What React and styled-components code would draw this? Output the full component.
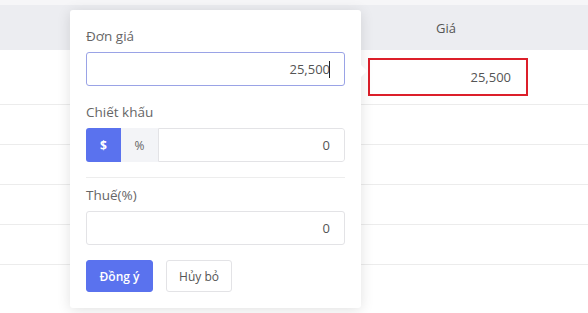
import React from 'react';
import styled, {createGlobalStyle} from 'styled-components';

const GlobalStyle = createGlobalStyle`
    html, body {
        margin: 0;
        padding: 0;
        background: #ffffff;
        font-family: "Open Sans", "Noto Sans", sans-serif;
    }
    * {
        box-sizing: border-box;
    }
`;

const Page = styled.div`
    position: relative;
    width: 588px;
    height: 313px;
    overflow: hidden;
    background: #ffffff;
`;

const TopStrip = styled.div`
    height: 5px;
    background: #f6f6f8;
`;

const Row = styled.div`
    display: grid;
    grid-template-columns: 360px 172px 1fr;
    align-items: center;
    height: ${(p) => p.h}px;
    background: ${(p) => (p.head ? '#ecedf1' : '#ffffff')};
    border-bottom: ${(p) => (p.head ? 'none' : '1px solid #ececec')};
`;

const HeadCell = styled.div`
    grid-column: 2;
    text-align: center;
    font-size: 13px;
    color: #555;
`;

const PriceCell = styled.div`
    grid-column: 2;
    padding: 0 4px 0 8px;
`;

const PriceBox = styled.div`
    height: 38px;
    border: 2px solid #dc1f2a;
    display: flex;
    align-items: center;
    justify-content: flex-end;
    padding-right: 15px;
    font-size: 13px;
    color: #555;
`;

const Popover = styled.div`
    position: absolute;
    left: 70px;
    top: 10px;
    width: 291px;
    height: 298px;
    background: #ffffff;
    border-radius: 3px;
    box-shadow: 0 2px 14px rgba(0, 0, 0, 0.12);
    padding: 16px 16px 0 16px;
    display: flex;
    flex-direction: column;

    &::after {
        content: '';
        position: absolute;
        right: -6px;
        top: 55px;
        border-top: 6px solid transparent;
        border-bottom: 6px solid transparent;
        border-left: 6px solid #ffffff;
    }
`;

const Label = styled.div`
    font-size: 13.5px;
    color: #666;
    height: 20px;
    line-height: 20px;
    margin-bottom: 6px;
`;

const Field = styled.div`
    height: 34px;
    flex: none;
    border: 1px solid ${(p) => (p.focus ? '#9aa3e6' : '#e3e3e6')};
    border-radius: 3px;
    display: flex;
    align-items: center;
    justify-content: flex-end;
    padding-right: 14px;
    font-size: 13px;
    color: #555;
`;

const Caret = styled.span`
    display: inline-block;
    width: 1px;
    height: 17px;
    background: #222;
    margin-left: -1px;
`;

const Group = styled.div`
    display: flex;
    height: 34px;
    flex: none;
    border-radius: 3px;
    overflow: hidden;
`;

const Addon = styled.div`
    width: ${(p) => p.w}px;
    display: flex;
    align-items: center;
    justify-content: center;
    font-size: 12px;
    font-weight: ${(p) => (p.active ? 700 : 400)};
    color: ${(p) => (p.active ? '#ffffff' : '#666')};
    background: ${(p) => (p.active ? '#5a72ee' : '#f3f4f7')};
`;

const GroupField = styled(Field)`
    flex: 1;
    border-radius: 0 3px 3px 0;
`;

const Divider = styled.div`
    height: 1px;
    flex: none;
    background: #ededed;
    margin: 15px 0 7px;
`;

const Spacer = styled.div`
    flex: none;
    height: ${(p) => p.h}px;
`;

const Actions = styled.div`
    display: flex;
    gap: 13px;
`;

const Button = styled.button`
    height: 32px;
    width: ${(p) => p.w}px;
    border-radius: 3px;
    font-family: inherit;
    font-size: 12px;
    font-weight: ${(p) => (p.primary ? 600 : 400)};
    color: ${(p) => (p.primary ? '#ffffff' : '#555')};
    background: ${(p) => (p.primary ? '#5a72ee' : '#ffffff')};
    border: 1px solid ${(p) => (p.primary ? '#5a72ee' : '#e3e3e6')};
    padding: 0;
`;

export default function App() {
    return (
        <Page>
            <GlobalStyle />
            <TopStrip />
            <Row head h={45}>
                <HeadCell>Giá</HeadCell>
            </Row>
            <Row h={55}>
                <PriceCell>
                    <PriceBox>25,500</PriceBox>
                </PriceCell>
            </Row>
            <Row h={40} />
            <Row h={40} />
            <Row h={40} />
            <Row h={40} />
            <Popover>
                <Label>Đơn giá</Label>
                <Field focus>
                    25,500<Caret />
                </Field>
                <Spacer h={16} />
                <Label>Chiết khấu</Label>
                <Group>
                    <Addon active w={35}>$</Addon>
                    <Addon w={37}>%</Addon>
                    <GroupField>0</GroupField>
                </Group>
                <Divider />
                <Label>Thuế(%)</Label>
                <Field>0</Field>
                <Spacer h={15} />
                <Actions>
                    <Button primary w={67}>Đồng ý</Button>
                    <Button w={66}>Hủy bỏ</Button>
                </Actions>
            </Popover>
        </Page>
    );
}
